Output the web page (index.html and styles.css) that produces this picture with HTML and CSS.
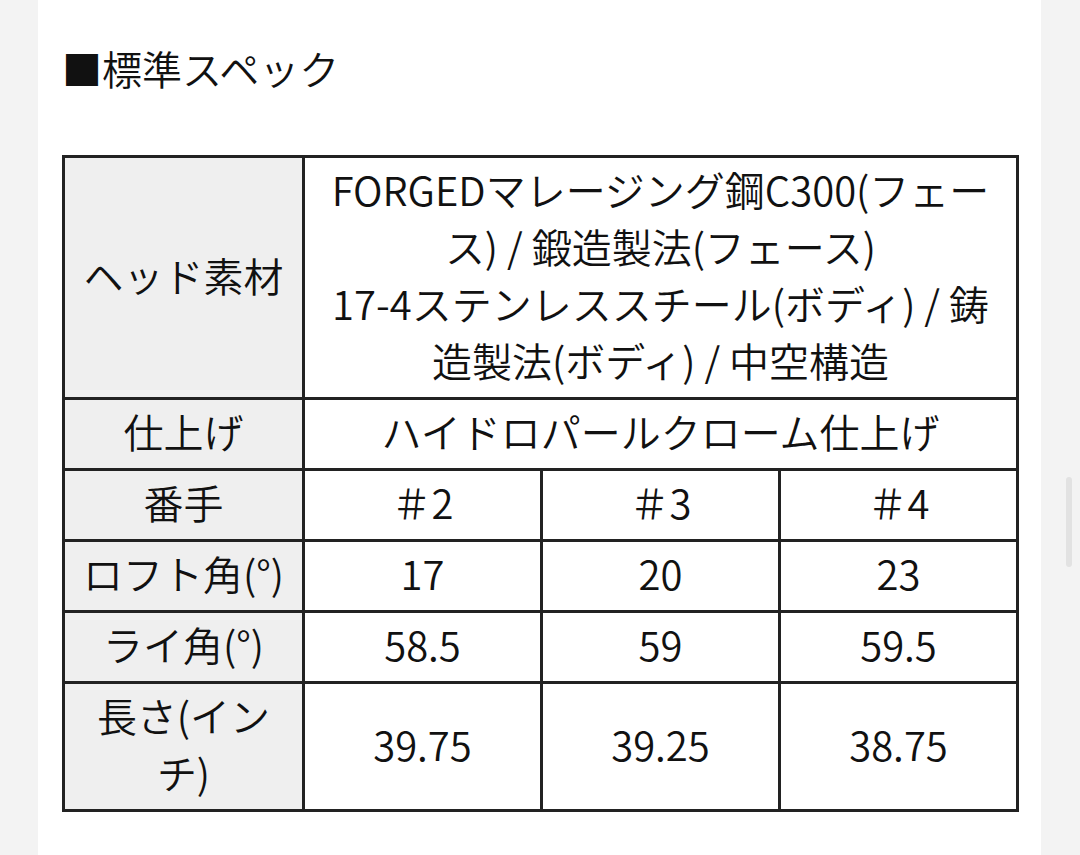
FILE: index.html
```html
<!DOCTYPE html>
<html lang="ja">
<head>
<meta charset="utf-8">
<title>標準スペック</title>
<link rel="stylesheet" href="styles.css">
</head>
<body>
<div class="card">
  <h2 class="title">■標準スペック</h2>
  <table class="spec">
    <colgroup>
      <col class="c-head">
      <col class="c-val">
      <col class="c-val">
      <col class="c-val">
    </colgroup>
    <tbody>
      <tr>
        <th>ヘッド素材</th>
        <td colspan="3">FORGEDマレージング鋼C300(フェー<br>ス) / 鍛造製法(フェース)<br>17-4ステンレススチール(ボディ) / 鋳<br>造製法(ボディ) / 中空構造</td>
      </tr>
      <tr>
        <th>仕上げ</th>
        <td colspan="3">ハイドロパールクローム仕上げ</td>
      </tr>
      <tr>
        <th>番手</th>
        <td>＃2</td>
        <td>＃3</td>
        <td>＃4</td>
      </tr>
      <tr>
        <th>ロフト角(°)</th>
        <td>17</td>
        <td>20</td>
        <td>23</td>
      </tr>
      <tr>
        <th>ライ角(°)</th>
        <td>58.5</td>
        <td>59</td>
        <td>59.5</td>
      </tr>
      <tr>
        <th>長さ(イン<br>チ)</th>
        <td>39.75</td>
        <td>39.25</td>
        <td>38.75</td>
      </tr>
    </tbody>
  </table>
</div>
<div class="scroll-thumb"></div>
</body>
</html>
```
FILE: styles.css
```css
html, body {
  margin: 0;
  padding: 0;
}
body {
  background: #f3f3f3;
  font-family: "Noto Sans CJK JP", "Noto Sans", sans-serif;
  color: #111;
  height: 855px;
  overflow: hidden;
}
.card {
  margin-left: 38px;
  width: 1003px;
  min-height: 855px;
  box-sizing: border-box;
  background: #fff;
  padding: 40px 23px 0 24px;
}
.title {
  margin: 0 0 59px;
  font-size: 40px;
  line-height: 56px;
  font-weight: 350;
}
.spec {
  width: 956px;
  table-layout: fixed;
  border-collapse: collapse;
  border: 3px solid #222;
}
.c-head { width: 240px; }
.c-val { width: 238px; }
.spec th,
.spec td {
  border: 3px solid #222;
  padding: 3px 4px 8px;
  font-size: 40px;
  line-height: 57px;
  font-weight: 350;
  text-align: center;
  vertical-align: middle;
}
.spec th {
  background: #efefef;
}
.spec td {
  background: #fff;
}
.scroll-thumb {
  position: absolute;
  left: 1066px;
  top: 477px;
  width: 6px;
  height: 90px;
  border-radius: 3px;
  background: #e2e2e2;
}
```
